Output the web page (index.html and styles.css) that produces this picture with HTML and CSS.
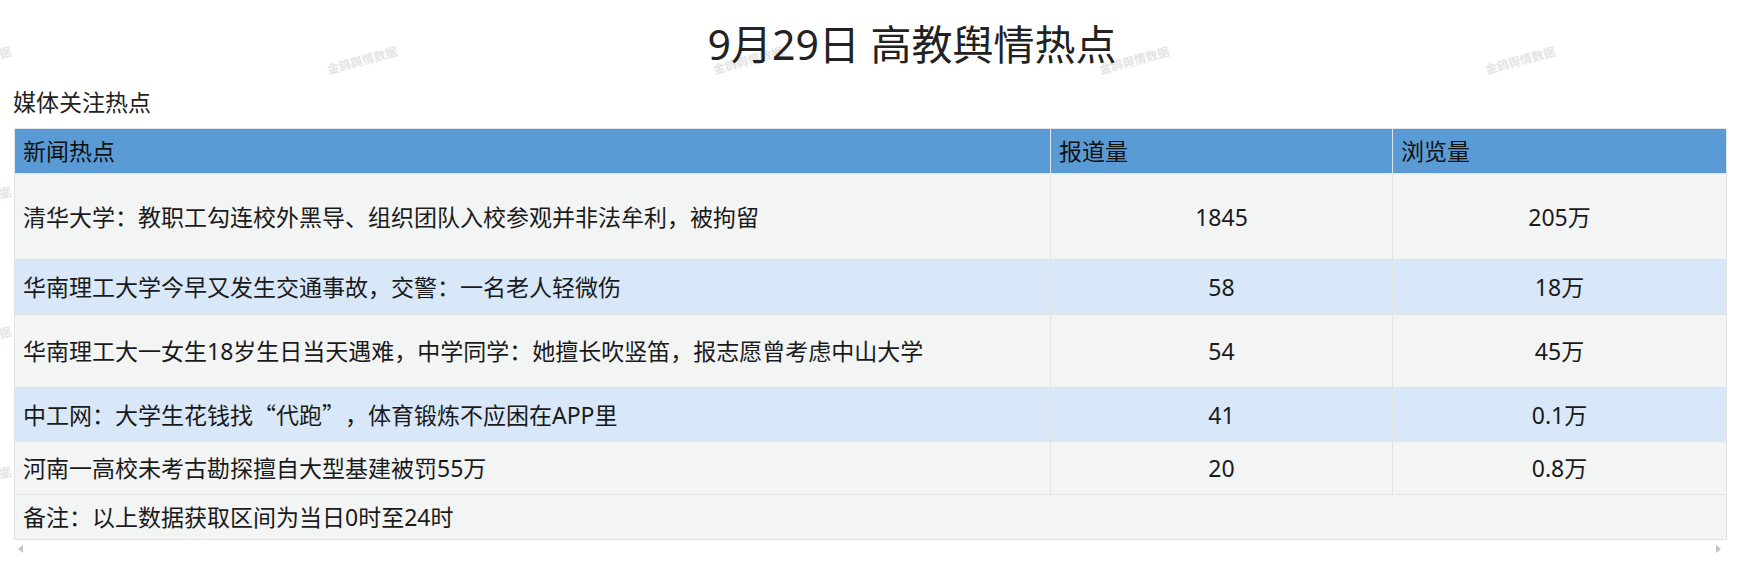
FILE: index.html
```html
<!DOCTYPE html>
<html lang="zh-CN">
<head>
<meta charset="utf-8">
<title>9月29日 高教舆情热点</title>
<link rel="stylesheet" href="styles.css">
</head>
<body>
<div class="watermarks" aria-hidden="true">
  <span class="wm wm-a1">金鸽舆情数据</span>
  <span class="wm wm-a2">金鸽舆情数据</span>
  <span class="wm wm-a3">金鸽舆情数据</span>
  <span class="wm wm-a4">金鸽舆情数据</span>
  <span class="wm wm-a5">金鸽舆情数据</span>
  <span class="wm wm-b1">金鸽舆情数据</span>
  <span class="wm wm-c1">金鸽舆情数据</span>
  <span class="wm wm-d1">金鸽舆情数据</span>
</div>
<main class="page">
  <h1 class="title">9月29日 高教舆情热点</h1>
  <div class="section-label">媒体关注热点</div>
  <div class="table-wrap">
    <table class="hot-table">
      <colgroup>
        <col class="c-news">
        <col class="c-report">
        <col class="c-view">
      </colgroup>
      <thead>
        <tr class="row-head">
          <th>新闻热点</th>
          <th>报道量</th>
          <th>浏览量</th>
        </tr>
      </thead>
      <tbody>
        <tr class="row-gray row-h86">
          <td>清华大学：教职工勾连校外黑导、组织团队入校参观并非法牟利，被拘留</td>
          <td class="num">1845</td>
          <td class="num">205万</td>
        </tr>
        <tr class="row-blue row-h55">
          <td>华南理工大学今早又发生交通事故，交警：一名老人轻微伤</td>
          <td class="num">58</td>
          <td class="num">18万</td>
        </tr>
        <tr class="row-gray row-h73">
          <td>华南理工大一女生18岁生日当天遇难，中学同学：她擅长吹竖笛，报志愿曾考虑中山大学</td>
          <td class="num">54</td>
          <td class="num">45万</td>
        </tr>
        <tr class="row-blue row-h54">
          <td>中工网：大学生花钱找<span class="cjk">“代跑”，</span>体育锻炼不应困在APP里</td>
          <td class="num">41</td>
          <td class="num">0.1万</td>
        </tr>
        <tr class="row-gray row-h53">
          <td>河南一高校未考古勘探擅自大型基建被罚55万</td>
          <td class="num">20</td>
          <td class="num">0.8万</td>
        </tr>
        <tr class="row-gray row-h45">
          <td colspan="3">备注：以上数据获取区间为当日0时至24时</td>
        </tr>
      </tbody>
    </table>
    <div class="scrollbar">
      <span class="arrow arrow-left"></span>
      <span class="arrow arrow-right"></span>
    </div>
  </div>
</main>
</body>
</html>
```

FILE: styles.css
```css
html, body {
  margin: 0;
  padding: 0;
  background: #ffffff;
}

body {
  font-family: "Noto Sans", "Noto Sans CJK SC", sans-serif;
  color: #1f1f1f;
  width: 1751px;
  height: 573px;
  overflow: hidden;
  position: relative;
}

.watermarks {
  position: absolute;
  inset: 0;
  z-index: 0;
  pointer-events: none;
}

.wm {
  position: absolute;
  font-family: "Noto Sans CJK SC", sans-serif;
  font-size: 12px;
  font-weight: 700;
  line-height: 16px;
  color: #e4e4e4;
  white-space: nowrap;
  transform: rotate(-15deg);
}

.wm-a1 { left: -60px; top: 52px; }
.wm-a2 { left: 326px; top: 52px; }
.wm-a3 { left: 712px; top: 52px; }
.wm-a4 { left: 1098px; top: 52px; }
.wm-a5 { left: 1484px; top: 52px; }
.wm-b1 { left: -60px; top: 192px; }
.wm-c1 { left: -60px; top: 332px; }
.wm-d1 { left: -60px; top: 472px; }

.page {
  position: relative;
  z-index: 1;
  margin-left: 14px;
  width: 1712px;
  padding-top: 16px;
}

.title {
  margin: 0;
  padding-left: 84px;
  text-align: center;
  font-size: 41px;
  line-height: 56px;
  font-weight: 400;
  color: #222222;
}

.section-label {
  margin-top: 15px;
  margin-bottom: 11px;
  font-size: 23px;
  line-height: 30px;
  color: #222222;
  margin-left: -1px;
}

.hot-table {
  width: 1712px;
  table-layout: fixed;
  border-collapse: collapse;
  font-size: 23px;
  line-height: 30px;
}

.c-news { width: 1036px; }
.c-report { width: 342px; }
.c-view { width: 334px; }

.hot-table th,
.hot-table td {
  border: 1px solid #e1e4e4;
  padding: 0 8px;
  text-align: left;
  font-weight: 400;
  color: #1a1a1a;
  white-space: nowrap;
}

.cjk {
  font-family: "Noto Sans CJK SC", sans-serif;
  text-spacing-trim: space-all;
}

.row-head {
  height: 45px;
  background: #5b9bd5;
}

.row-head th {
  color: #111111;
  border-color: #dfe6ee;
}

.hot-table td.num {
  text-align: center;
  padding: 0;
}

.row-gray { background: #f3f4f4; }
.row-blue { background: #d9e8f9; }

.row-h86 { height: 86px; }
.row-h55 { height: 55px; }
.row-h73 { height: 73px; }
.row-h54 { height: 54px; }
.row-h53 { height: 53px; }
.row-h45 { height: 45px; }

.scrollbar {
  height: 17px;
  display: flex;
  align-items: center;
  justify-content: space-between;
  padding: 0 5px 0 4px;
}

.arrow {
  width: 0;
  height: 0;
  border-top: 4.5px solid transparent;
  border-bottom: 4.5px solid transparent;
}

.arrow-left { border-right: 5px solid #c4c4c4; }
.arrow-right { border-left: 5px solid #c4c4c4; }
```
